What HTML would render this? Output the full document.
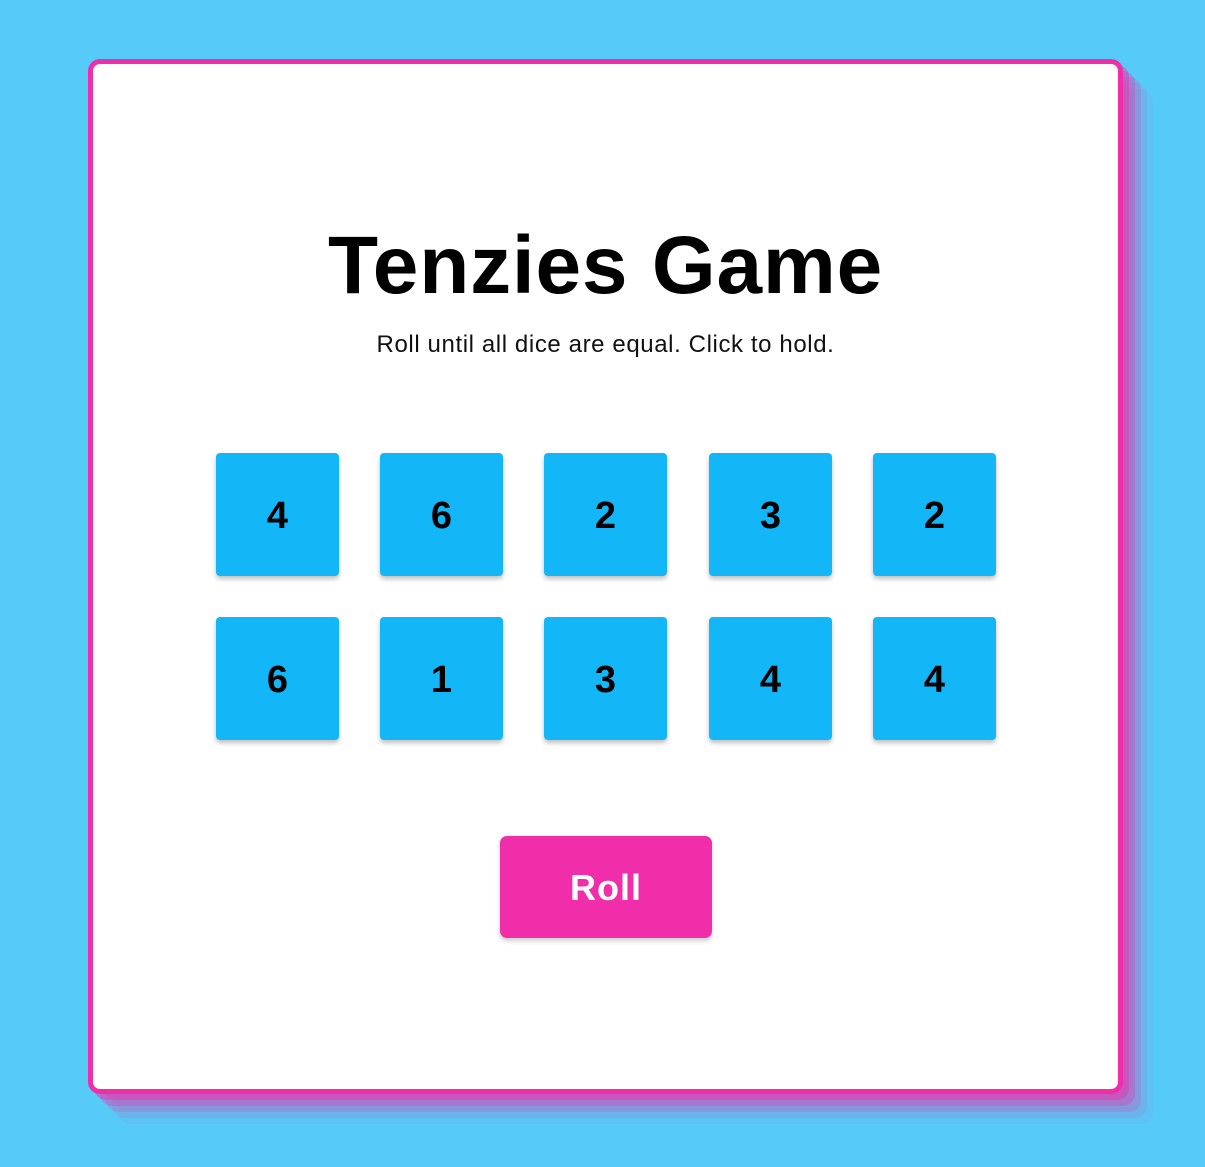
<!DOCTYPE html>
<html><head><style>
html,body{margin:0;padding:0;}
body{width:1205px;height:1167px;background:#57cbf8;position:relative;overflow:hidden;font-family:"Liberation Sans",sans-serif;}
.card{position:absolute;left:88px;top:59px;width:1025px;height:1025px;border:5px solid #f02eaa;border-radius:12px;background:#fff;
box-shadow:6px 6px 0 rgba(240,46,170,.45),12px 12px 0 rgba(240,46,170,.3),18px 18px 0 rgba(240,46,170,.2),24px 24px 0 rgba(240,46,170,.1),30px 30px 0 rgba(240,46,170,.05);}
h1{position:absolute;left:0;right:0;top:157px;margin:0;text-align:center;font-size:82px;line-height:90px;font-weight:bold;color:#000;letter-spacing:0.8px;}
p{position:absolute;left:0;right:0;top:266px;margin:0;text-align:center;font-size:24px;line-height:30px;color:#111;letter-spacing:0.6px;}
.die{position:absolute;width:123px;height:123px;background:#13b6f6;border-radius:4px;box-shadow:0 3px 5px rgba(0,0,0,.25);display:flex;align-items:center;justify-content:center;font-size:38px;font-weight:bold;color:#000;padding-top:4px;box-sizing:border-box;}
.btn{position:absolute;left:407px;top:772px;width:212px;height:102px;background:#f02eaa;border-radius:7px;box-shadow:0 3px 5px rgba(0,0,0,.2);color:#fff;font-size:36px;font-weight:bold;display:flex;align-items:center;justify-content:center;letter-spacing:1px;padding-top:2px;box-sizing:border-box;}
</style></head><body>
<div class="card">
<h1>Tenzies Game</h1>
<p>Roll until all dice are equal. Click to hold.</p>
<div class="die" style="left:123px;top:389px">4</div>
<div class="die" style="left:287px;top:389px">6</div>
<div class="die" style="left:451px;top:389px">2</div>
<div class="die" style="left:616px;top:389px">3</div>
<div class="die" style="left:780px;top:389px">2</div>
<div class="die" style="left:123px;top:553px">6</div>
<div class="die" style="left:287px;top:553px">1</div>
<div class="die" style="left:451px;top:553px">3</div>
<div class="die" style="left:616px;top:553px">4</div>
<div class="die" style="left:780px;top:553px">4</div>
<div class="btn">Roll</div>
</div>
</body></html>
